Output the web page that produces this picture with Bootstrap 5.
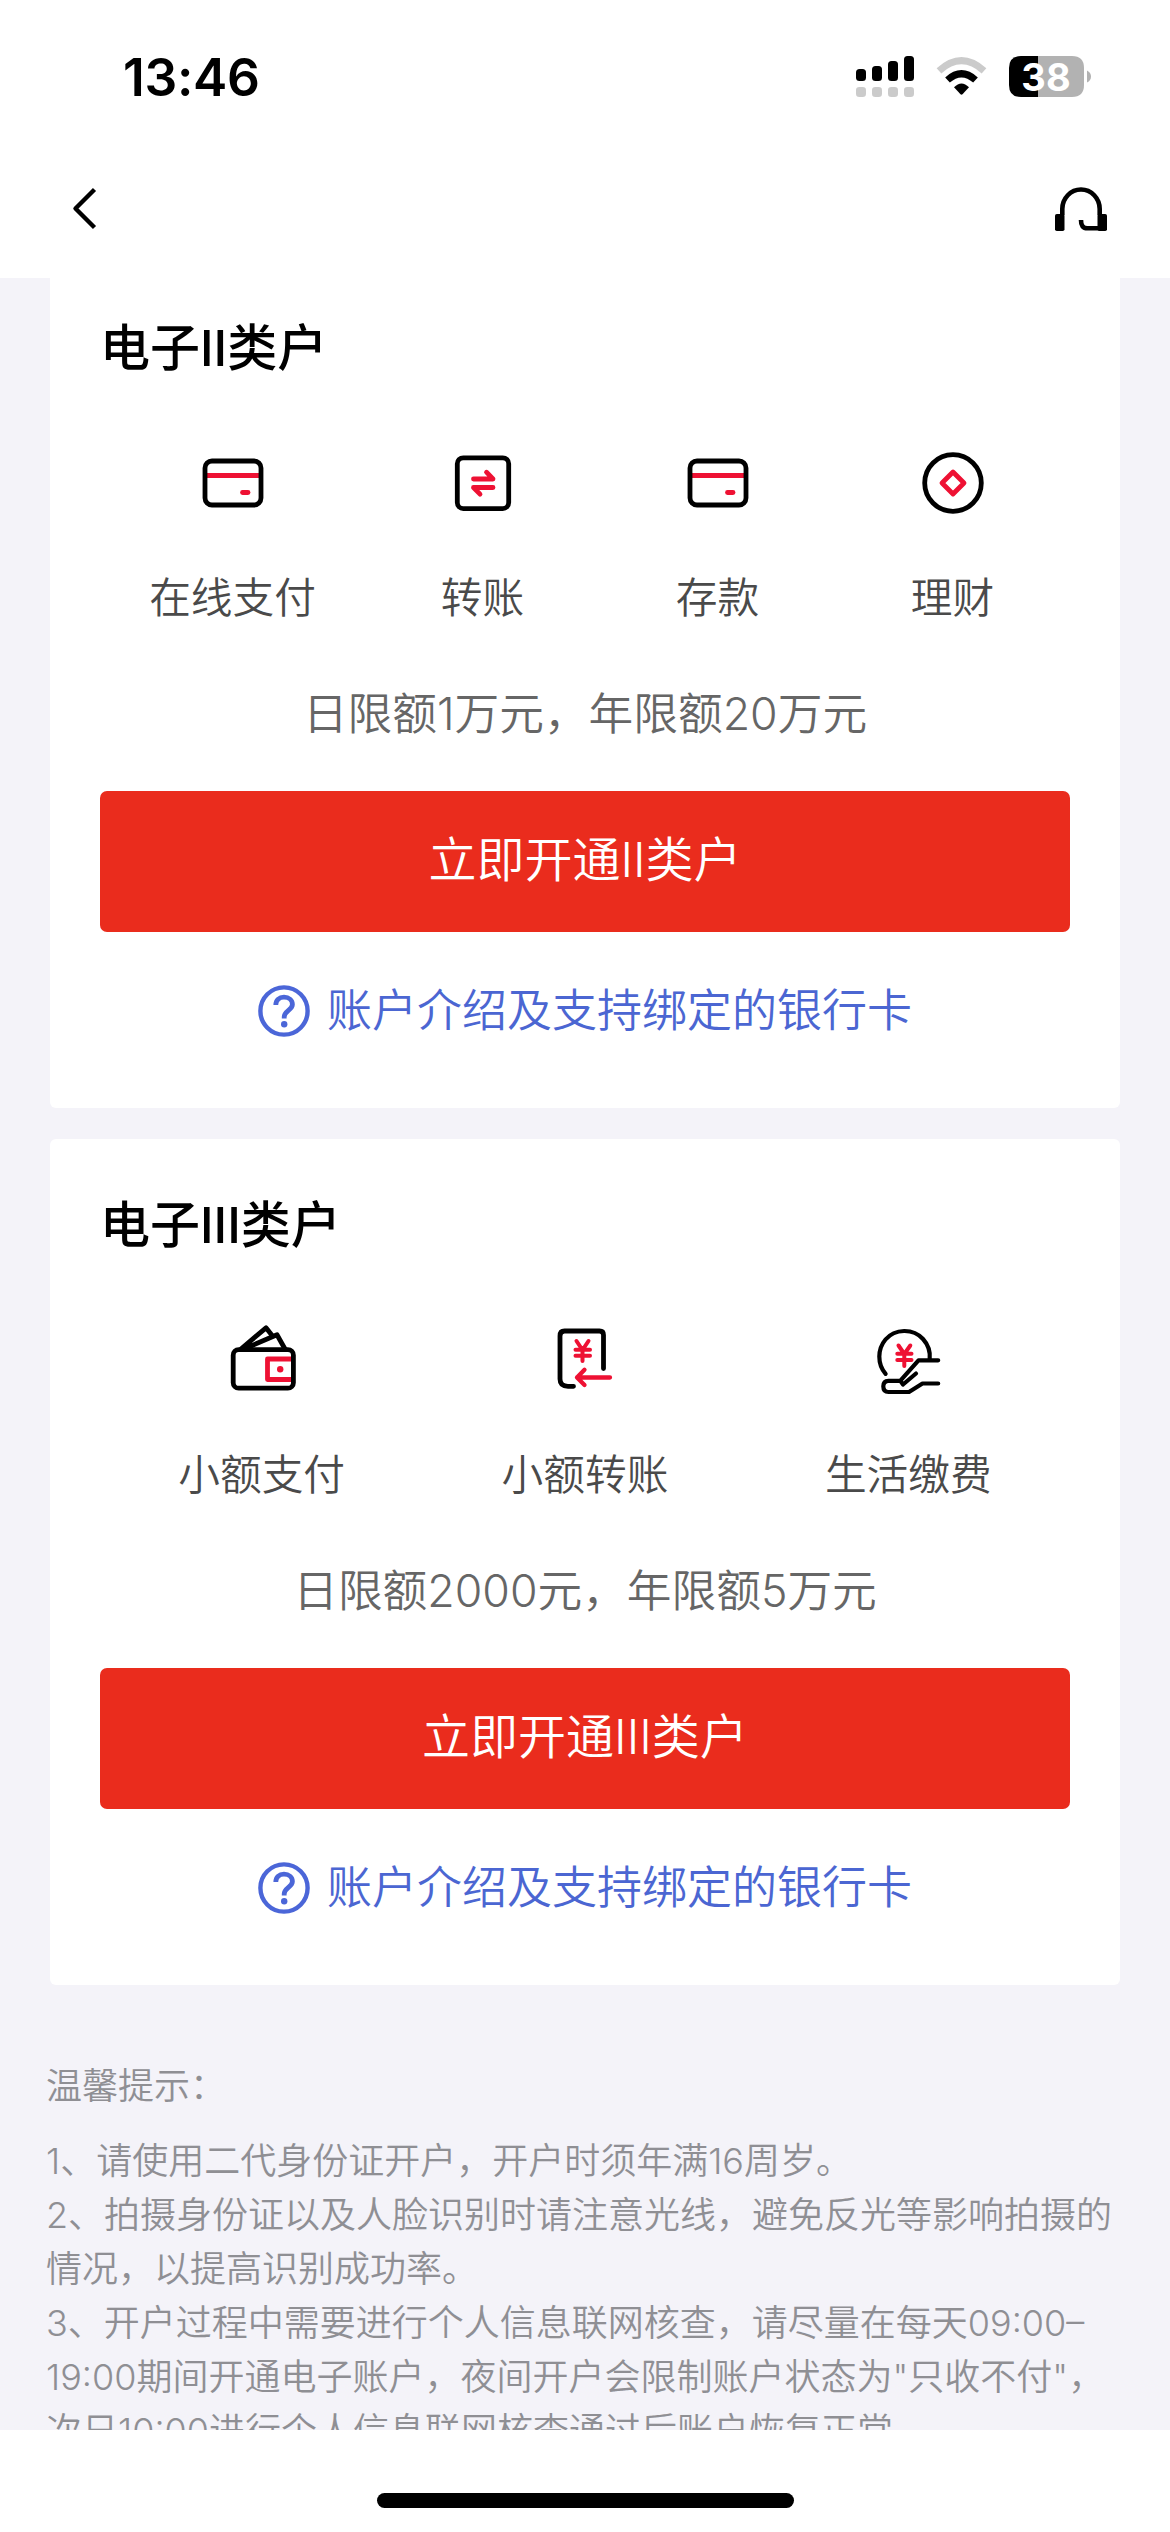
<!DOCTYPE html>
<html lang="zh-CN">
<head>
<meta charset="utf-8">
<meta name="viewport" content="width=device-width, initial-scale=1">
<title>电子账户</title>
<link href="https://cdn.jsdelivr.net/npm/bootstrap@5.3.0/dist/css/bootstrap.min.css" rel="stylesheet">
<style>
  body { font-family: Inter, "Noto Sans CJK SC", sans-serif; color: #000; background: #fff; width: 1170px; height: 2532px; overflow: hidden; font-weight: 350; }
  svg { display: block; flex: none; }
  .status-bar { height: 140px; padding: 14px 78px 0 123px; }
  .clock { font-size: 51.5px; font-weight: 600; line-height: 1; letter-spacing: -.3px; margin-top: 1px; }
  .nav-row { height: 138px; padding: 0 61px 0 71px; }
  .page-main { height: 2152px; background: #f4f3f9; padding: 0 50px; }
  .acct { border: 0; border-radius: 6px; padding: 0 50px; height: 846px; margin-bottom: 31px; }
  .acct:first-child { margin-top: -16px; }
  .acct-title { font-size: 50px; line-height: 60px; font-weight: 500; margin: 56px 0 0; }
  .features { margin-top: 60px; }
  .feature { flex: 1 1 0; }
  .features-4 .feature:first-child { flex: 0 0 265px; }
  .feature span { font-size: 41.7px; line-height: 50px; color: #4a4a4a; margin-top: 45px; }
  .limit { font-size: 44.7px; line-height: 54px; color: #666; margin: 64px 0 0; }
  .open-btn { height: 141px; margin-top: 50px; border: 0; border-radius: 7px; background: #ea2c1d; color: #fff; font-size: 48px; line-height: 60px; font-weight: 350; padding: 0 0 3px; }
  .help { font-size: 45px; line-height: 54px; color: #4b66d2; margin-top: 52px; gap: 17px; }
  .tips { font-size: 36px; line-height: 54px; color: #8f8f94; margin: 43px -20px 0 -4px; white-space: nowrap; }
  .tips-head { margin-bottom: 21px; }
  .home-area { height: 102px; padding-top: 63px; }
  .home-bar { width: 417px; height: 15px; background: #000; }
  .ink { fill: none; stroke: #000; stroke-width: 4.8; stroke-linecap: round; stroke-linejoin: round; }
  .accent { fill: none; stroke: #ee1133; stroke-width: 4.8; stroke-linecap: round; stroke-linejoin: round; }
</style>
<script src="https://cdn.jsdelivr.net/npm/bootstrap@5.3.0/dist/js/bootstrap.bundle.min.js"></script>
</head>
<body>
<svg width="0" height="0" class="position-absolute">
  <symbol id="i-card" viewBox="0 0 90 90">
    <path class="accent" style="stroke-linecap:butt" d="M19 37.5H71"/>
    <path class="accent" d="M54.5 54.5H60"/>
    <rect class="ink" x="17" y="23" width="56" height="44" rx="7"/>
  </symbol>
  <symbol id="i-swap" viewBox="0 0 90 90">
    <rect class="ink" x="19.3" y="19.8" width="51.4" height="50.8" rx="6"/>
    <path class="accent" d="M35.5 41H55L48.5 34.2M55 49.5H35.5L42 56.2"/>
  </symbol>
  <symbol id="i-coin" viewBox="0 0 90 90">
    <circle class="ink" cx="45" cy="45" r="28.3"/>
    <path class="accent" d="M45 34L56 45L45 56L34 45Z"/>
  </symbol>
  <symbol id="i-wallet" viewBox="0 0 90 90">
    <path class="ink" d="M24.5 33.5L49 12.8L55.5 21M27 34L60 19.8L68 34"/>
    <path class="accent" style="stroke-linecap:butt" d="M75 44H50.5V64.5H75"/>
    <circle cx="63.2" cy="54.2" r="3.2" fill="#ee1133"/>
    <rect class="ink" x="16.2" y="34.7" width="60.2" height="38.5" rx="5.5"/>
  </symbol>
  <symbol id="i-phone" viewBox="0 0 90 90">
    <path class="ink" d="M63.5 53.5V20Q63.5 16 59.5 16H24.5Q20 16 20 21V64Q20 71.3 28 71.3H33.5"/>
    <path class="accent" style="stroke-width:4" d="M36.5 26L42.5 35L48.5 26M35.5 34.8H50M35.5 40.8H50M42.5 35V46"/>
    <path class="accent" style="stroke-width:4.3" d="M70 62.5H37M44.5 54.8L37 62.500L44.500 70"/>
  </symbol>
  <symbol id="i-hand" viewBox="0 0 90 90">
    <path class="accent" style="stroke-width:4" d="M35.5 30.5L41.3 39L47.3 30.5M34.3 38.8H48.5M34.3 45H48.5M41.3 39V51"/>
    <path class="ink" style="stroke-width:4.2" d="M22.6 58.8C14 49 14.5 34 22.5 24.5C32 13.5 50 13 60 24C65 29.5 67.5 37 66.7 44.5"/>
    <path class="ink" style="stroke-width:4.2" d="M75.2 45.3H55.5L37.2 65.8H25.5Q20.3 66 20.3 71.3Q20.3 77 25.5 77H46L59.5 68.5H75.2M37.5 66L40 69.5L53 58.5"/>
  </symbol>
  <symbol id="i-help" viewBox="0 0 52 52">
    <circle cx="26" cy="26" r="23.6" fill="none" stroke="#4b66d8" stroke-width="4.4"/>
    <path d="M17.8 20C17.8 15 21.2 12.2 26 12.2C31 12.2 34.4 15.2 34.4 19.4C34.4 25 26.2 25.8 26.2 32V33.6" fill="none" stroke="#4b66d8" stroke-width="4.8"/>
    <circle cx="26.2" cy="39.2" r="3.2" fill="#4b66d8"/>
  </symbol>
</svg>

<header>
  <div class="status-bar d-flex align-items-center justify-content-between">
    <div class="clock">13:46</div>
    <svg width="236" height="42" viewBox="856 57 236 42">
      <g><rect x="856" y="70" width="10" height="12" rx="3.5"/><rect x="872" y="67" width="10" height="15" rx="3.5"/><rect x="888" y="62" width="10" height="20" rx="3.5"/><rect x="904" y="57" width="10" height="25" rx="3.5"/></g>
      <g fill="#cbcbcb"><rect x="856" y="88" width="10" height="10" rx="3.3"/><rect x="872" y="88" width="10" height="10" rx="3.3"/><rect x="888" y="88" width="10" height="10" rx="3.3"/><rect x="904" y="88" width="10" height="10" rx="3.3"/></g>
      <path d="M939 71.8Q961.500 51.500 984 71.800" fill="none" stroke="#cbcbcb" stroke-width="7"/>
      <path d="M947.500 81Q961.500 68.500 975.500 81" fill="none" stroke="#000" stroke-width="7"/>
      <path d="M954 88.300Q961.500 80.500 969 88.300L962.500 95.300Q961.500 96.200 960.500 95.300Z"/>
      <path d="M1021 57H1038V98H1021Q1009 98 1009 86V69Q1009 57 1021 57Z"/>
      <path d="M1038 57H1072Q1084 57 1084 69V86Q1084 98 1072 98H1038Z" fill="#b2b2b2"/>
      <path d="M1087 71.500Q1091 73.500 1091 77.500Q1091 81.500 1087 83.500Z" fill="#b2b2b2"/>
      <text x="1046" y="91.500" text-anchor="middle" font-family="Inter" font-size="38" font-weight="700" fill="#fff">38</text>
    </svg>
  </div>
  <div class="nav-row d-flex align-items-center justify-content-between">
    <svg width="28" height="46" viewBox="0 0 28 46"><path d="M23.500 3.500L4.500 22.500L23.500 41.500" fill="none" stroke="#000" stroke-width="4.400" stroke-linejoin="round"/></svg>
    <svg width="56" height="46" viewBox="1053 185 56 46">
      <path d="M1062.300 214V208A18.700 19.500 0 0 1 1099.700 208V214" fill="none" stroke="#000" stroke-width="4.600"/>
      <rect x="1055" y="213" width="9.500" height="17" rx="1.800"/><rect x="1097.500" y="213" width="9.500" height="17" rx="1.800"/>
      <path d="M1081 219Q1080.800 227.300 1087.500 227.300H1101" fill="none" stroke="#000" stroke-width="4.600"/>
    </svg>
  </div>
</header>

<main class="page-main overflow-hidden">
  <div class="d-flex flex-column">
  <section class="card acct">
    <h2 class="acct-title">电子II类户</h2>
    <div class="features features-4 d-flex text-center">
      <div class="feature d-flex flex-column align-items-center"><svg width="90" height="90"><use href="#i-card"/></svg><span>在线支付</span></div>
      <div class="feature d-flex flex-column align-items-center"><svg width="90" height="90"><use href="#i-swap"/></svg><span>转账</span></div>
      <div class="feature d-flex flex-column align-items-center"><svg width="90" height="90"><use href="#i-card"/></svg><span>存款</span></div>
      <div class="feature d-flex flex-column align-items-center"><svg width="90" height="90"><use href="#i-coin"/></svg><span>理财</span></div>
    </div>
    <p class="limit text-center">日限额1万元，年限额20万元</p>
    <button class="btn open-btn w-100" type="button">立即开通II类户</button>
    <a class="help d-flex justify-content-center align-items-center text-decoration-none" href="#"><svg width="52" height="52"><use href="#i-help"/></svg><span>账户介绍及支持绑定的银行卡</span></a>
  </section>
  <section class="card acct">
    <h2 class="acct-title">电子III类户</h2>
    <div class="features d-flex text-center">
      <div class="feature d-flex flex-column align-items-center"><svg width="90" height="90"><use href="#i-wallet"/></svg><span>小额支付</span></div>
      <div class="feature d-flex flex-column align-items-center"><svg width="90" height="90"><use href="#i-phone"/></svg><span>小额转账</span></div>
      <div class="feature d-flex flex-column align-items-center"><svg width="90" height="90"><use href="#i-hand"/></svg><span>生活缴费</span></div>
    </div>
    <p class="limit text-center">日限额2000元，年限额5万元</p>
    <button class="btn open-btn w-100" type="button">立即开通III类户</button>
    <a class="help d-flex justify-content-center align-items-center text-decoration-none" href="#"><svg width="52" height="52"><use href="#i-help"/></svg><span>账户介绍及支持绑定的银行卡</span></a>
  </section>
  <section class="tips">
    <div class="tips-head">温馨提示：</div>
    <div>1、请使用二代身份证开户，开户时须年满16周岁。</div>
    <div>2、拍摄身份证以及人脸识别时请注意光线，避免反光等影响拍摄的<br>情况，以提高识别成功率。</div>
    <div>3、开户过程中需要进行个人信息联网核查，请尽量在每天09:00–<br>19:00期间开通电子账户，夜间开户会限制账户状态为"只收不付"，<br>次日10:00进行个人信息联网核查通过后账户恢复正常。</div>
  </section>
  </div>
</main>
<footer class="home-area d-flex justify-content-center"><div class="home-bar rounded-pill"></div></footer>
</body>
</html>
